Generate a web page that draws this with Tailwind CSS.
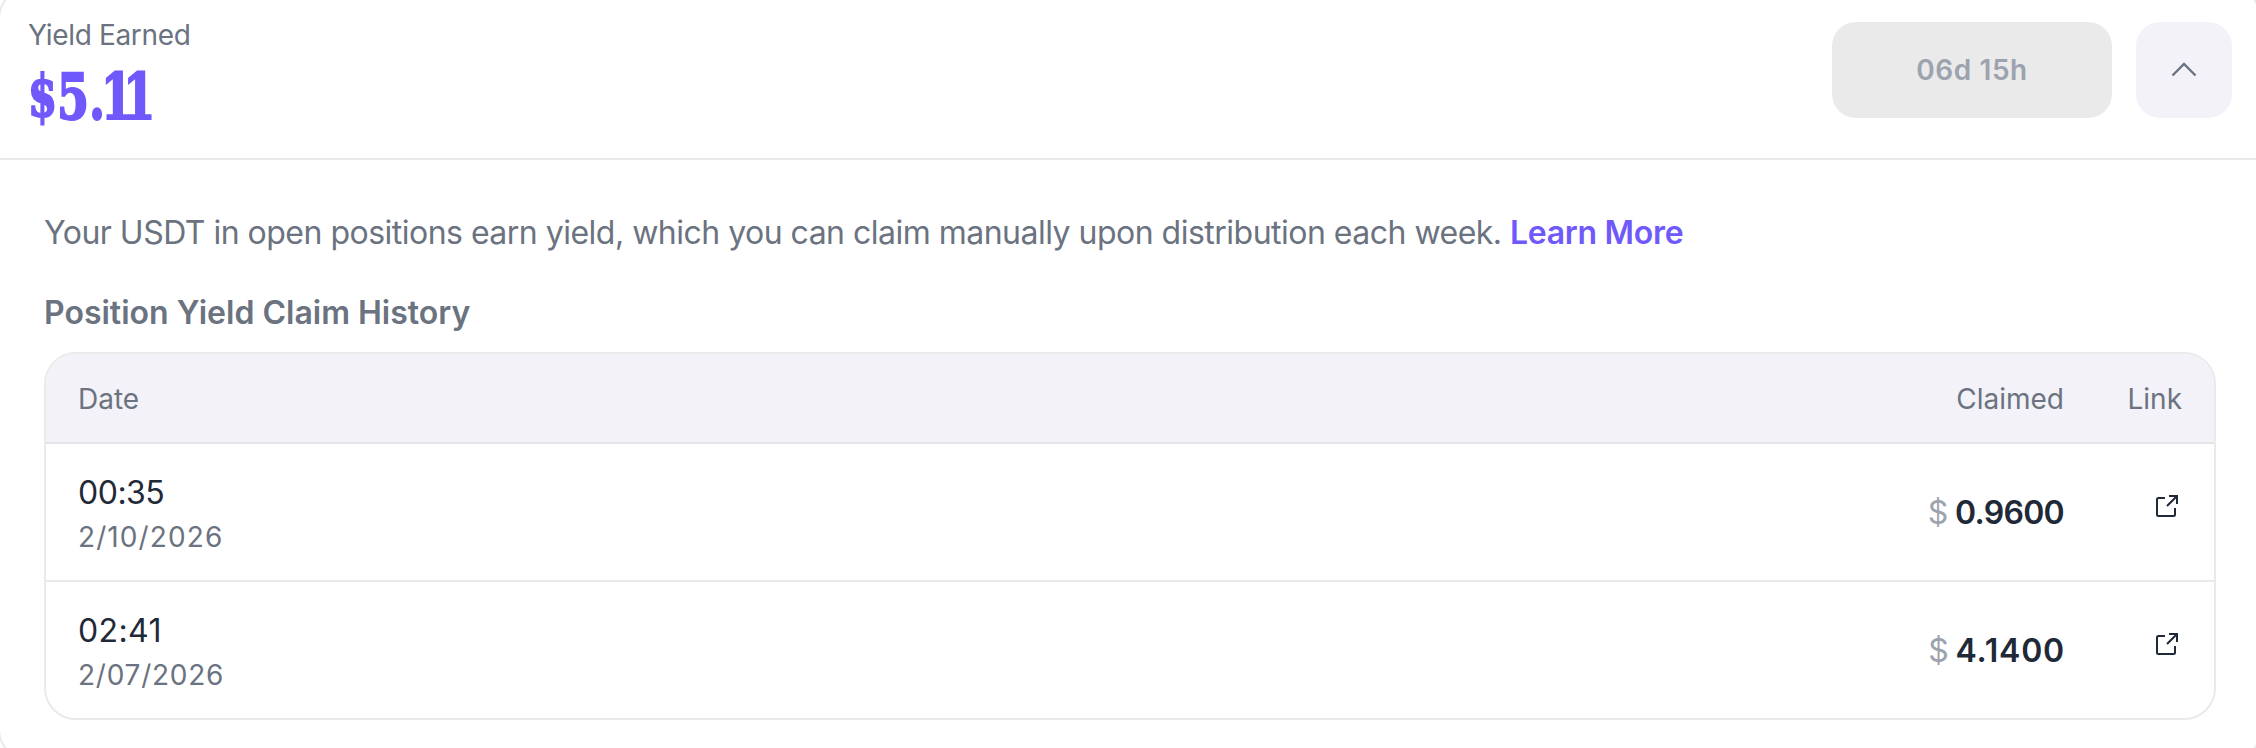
<!DOCTYPE html>
<html lang="en">
<head>
  <meta charset="UTF-8">
  <meta name="viewport" content="width=device-width, initial-scale=1.0">
  <title>Yield Earned</title>
  <script src="https://cdn.jsdelivr.net/npm/@tailwindcss/browser@4"></script>
</head>
<body class="h-[748px] overflow-hidden bg-white font-['Inter',sans-serif] text-[#6b7280]">
  <div class="-mt-[13px] -ml-0.5 h-[774px] w-[2264px] rounded-[32px] border-2 border-[#eaeaea]">
    <!-- Header -->
    <div class="flex h-[171px] items-start justify-between border-b-2 border-[#eaeaea] pt-[33px] pr-7 pl-7">
      <div>
        <p class="mt-px text-[28px] leading-[24px] tracking-[-0.35px]">Yield Earned</p>
        <p class="mt-3.5 origin-left scale-x-80 text-[64px] leading-[72px] font-bold whitespace-nowrap text-[#7059fb] font-['DejaVu_Serif_Condensed','DejaVu_Serif',serif] [-webkit-text-stroke:2px_#7059fb]"><span class="align-[3px] text-[58px] leading-none">$</span>5<span class="tracking-[-0.08em]">.</span><span class="tracking-[-0.19em]">11</span></p>
      </div>
      <div class="flex gap-6">
        <button class="h-24 w-[280px] rounded-3xl bg-[#eaeaea] text-[28px] font-semibold tracking-[0.6px] text-[#9ca3af]">06d 15h</button>
        <button class="flex size-24 items-center justify-center rounded-3xl bg-[#f3f2f8]">
          <svg class="size-8" viewBox="0 0 32 32" fill="none" stroke="#6b7280" stroke-width="2.4"><path d="M4.5 21.5 16 10l11.5 11.5" /></svg>
        </button>
      </div>
    </div>

    <!-- Claim history -->
    <div class="pt-[53px] pl-11">
      <p class="text-[32px] leading-[40px] tracking-[-0.51px]">Your USDT in open positions earn yield, which you can claim manually upon distribution each week. <a class="font-semibold tracking-[-0.3px] text-[#7059fb]">Learn More</a></p>
      <h2 class="mt-10 text-[32px] leading-[40px] font-semibold">Position Yield Claim History</h2>

      <div class="mt-[19px] w-[2172px] overflow-hidden rounded-[32px] border-2 border-[#eaeaea]">
        <div class="flex h-[90px] items-center border-b-2 border-[#e3e3e8] bg-[#f3f2f8] px-8 pt-0.5 text-[28px]">
          <span class="flex-1">Date</span>
          <span>Claimed</span>
          <span class="w-[118px] text-right">Link</span>
        </div>

        <div class="flex h-[138px] items-center border-b-2 border-[#eaeaea] px-8">
          <div class="flex-1 pt-0.5">
            <p class="text-[32px] leading-[48px] tracking-[-0.5px] text-[#1f2937]">00:35</p>
            <p class="text-[28px] leading-[40px] tracking-[1.1px]">2/10/2026</p>
          </div>
          <p class="pt-px text-[32px] font-semibold tracking-[-0.7px] text-[#1f2937]"><span class="font-normal text-[#9ca3af]">$</span> 0.9600</p>
          <a class="mb-3 ml-[86px]">
            <svg class="size-8" viewBox="0 0 32 32" fill="none" stroke="#1f2937" stroke-width="2"><path d="M15 8H8.5Q7 8 7 9.5v15Q7 26 8.5 26h15q1.5 0 1.5-1.5V18M19 6h8v8M27 6 17 16" /></svg>
          </a>
        </div>

        <div class="flex h-[136px] items-center px-8">
          <div class="flex-1 pt-0.5">
            <p class="text-[32px] leading-[48px] tracking-[0.4px] text-[#1f2937]">02:41</p>
            <p class="text-[28px] leading-[40px] tracking-[0.75px]">2/07/2026</p>
          </div>
          <p class="pt-px text-[32px] font-semibold tracking-[-0.7px] text-[#1f2937]"><span class="font-normal text-[#9ca3af]">$</span> <span class="tracking-[0.8px]">4.1400</span></p>
          <a class="mb-3 ml-[85px]">
            <svg class="size-8" viewBox="0 0 32 32" fill="none" stroke="#1f2937" stroke-width="2"><path d="M15 8H8.5Q7 8 7 9.5v15Q7 26 8.5 26h15q1.5 0 1.5-1.5V18M19 6h8v8M27 6 17 16" /></svg>
          </a>
        </div>
      </div>
    </div>
  </div>
</body>
</html>
